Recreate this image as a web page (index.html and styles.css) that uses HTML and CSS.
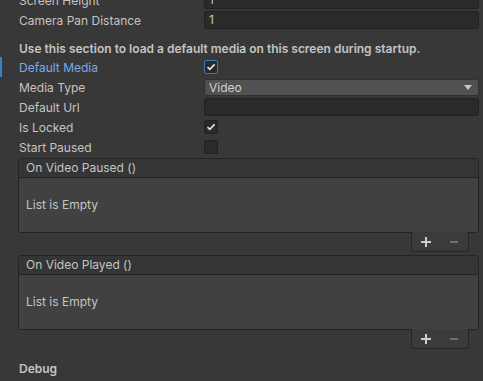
FILE: index.html
```html
<!DOCTYPE html>
<html lang="en">
<head>
  <meta charset="UTF-8">
  <title>Inspector - Media Screen</title>
  <link rel="stylesheet" href="styles.css">
</head>
<body>
  <div class="inspector">
    <div class="row">
      <span class="label">Screen Height</span>
      <div class="field">1</div>
    </div>
    <div class="row">
      <span class="label">Camera Pan Distance</span>
      <div class="field">1</div>
    </div>

    <div class="section-note">Use this section to load a default media on this screen during startup.</div>

    <div class="row row-active">
      <span class="label">Default Media</span>
      <div class="toggle toggle-focus">
        <svg viewBox="0 0 14 14" width="14" height="14"><path d="M3.5 7.2 L5.8 9.4 L10.6 4.4" fill="none" stroke="#e4e4e4" stroke-width="1.6"/></svg>
      </div>
    </div>
    <div class="row">
      <span class="label">Media Type</span>
      <div class="dropdown">
        <span>Video</span>
        <svg class="dropdown-arrow" viewBox="0 0 8 5" width="8" height="5"><path d="M0 0 L8 0 L4 5 Z" fill="#c4c4c4"/></svg>
      </div>
    </div>
    <div class="row">
      <span class="label">Default Url</span>
      <div class="field"></div>
    </div>
    <div class="row">
      <span class="label">Is Locked</span>
      <div class="toggle">
        <svg viewBox="0 0 14 14" width="14" height="14"><path d="M3.5 7.2 L5.8 9.4 L10.6 4.4" fill="none" stroke="#e4e4e4" stroke-width="1.6"/></svg>
      </div>
    </div>
    <div class="row">
      <span class="label">Start Paused</span>
      <div class="toggle"></div>
    </div>

    <!-- UnityEvent lists -->
    <div class="event">
      <div class="event-box">
        <div class="event-header">On Video Paused ()</div>
        <div class="event-body">List is Empty</div>
      </div>
      <div class="event-footer">
        <svg viewBox="0 0 10 10" width="10" height="10"><path d="M0 5 H10 M5 0 V10" stroke="#cfcfcf" stroke-width="2"/></svg>
        <svg viewBox="0 0 10 10" width="10" height="10"><path d="M1 5 H9" stroke="#6f6f6f" stroke-width="2"/></svg>
      </div>
    </div>

    <div class="event">
      <div class="event-box">
        <div class="event-header">On Video Played ()</div>
        <div class="event-body">List is Empty</div>
      </div>
      <div class="event-footer">
        <svg viewBox="0 0 10 10" width="10" height="10"><path d="M0 5 H10 M5 0 V10" stroke="#cfcfcf" stroke-width="2"/></svg>
        <svg viewBox="0 0 10 10" width="10" height="10"><path d="M1 5 H9" stroke="#6f6f6f" stroke-width="2"/></svg>
      </div>
    </div>

    <div class="foldout">Debug</div>
  </div>
</body>
</html>
```

FILE: styles.css
```css
body {
  margin: 0;
  padding: 0;
  background-color: #383838;
  color: #c4c4c4;
  font-family: Inter, "Noto Sans", sans-serif;
  font-size: 12px;
  overflow: hidden;
}

.inspector {
  margin-top: -10px;
}

.row {
  display: grid;
  grid-template-columns: 185px 1fr;
  align-items: center;
  height: 20px;
  padding: 0 4px 0 19px;
}

.row-active {
  border-left: 2px solid #2d84cf;
  padding-left: 17px;
}

.row-active .label {
  color: #7aa9ee;
}

.label {
  white-space: nowrap;
}

.field {
  height: 16px;
  line-height: 16px;
  background-color: #2a2a2a;
  border: 1px solid #212121;
  border-radius: 3px;
  padding: 0 4px;
}

.dropdown {
  display: flex;
  justify-content: space-between;
  align-items: center;
  height: 15px;
  background-color: #515151;
  border: 1px solid #303030;
  border-radius: 3px;
  padding: 0 6px 0 4px;
  color: #d0d0d0;
}

.toggle {
  width: 12px;
  height: 12px;
  background-color: #2a2a2a;
  border: 1px solid #212121;
  border-radius: 2px;
}

.toggle svg {
  display: block;
  margin: -1px;
}

.toggle-focus {
  border-color: #3a79bb;
}

.section-note {
  margin-top: 10px;
  height: 17px;
  line-height: 17px;
  padding-left: 19px;
  font-weight: 600;
  white-space: nowrap;
}

.event {
  display: flex;
  flex-direction: column;
  margin: 1px 4px 0 18px;
}

.event + .event {
  margin-top: 3px;
}

.event-box {
  border: 1px solid #242424;
  border-radius: 3px;
  overflow: hidden;
}

.event-header {
  height: 18px;
  line-height: 18px;
  padding-left: 7px;
  background-color: #353535;
  border-bottom: 1px solid #242424;
}

.event-body {
  height: 54px;
  line-height: 54px;
  padding-left: 7px;
  background-color: #414141;
}

.event-footer {
  align-self: flex-end;
  display: flex;
  justify-content: space-around;
  align-items: center;
  width: 56px;
  height: 19px;
  margin: -1px 10px 0 0;
  background-color: #3b3b3b;
  border: 1px solid #242424;
  border-top: none;
  border-radius: 0 0 3px 3px;
}

.foldout {
  margin-top: 11px;
  height: 18px;
  line-height: 18px;
  padding-left: 19px;
  font-weight: 600;
}
```
